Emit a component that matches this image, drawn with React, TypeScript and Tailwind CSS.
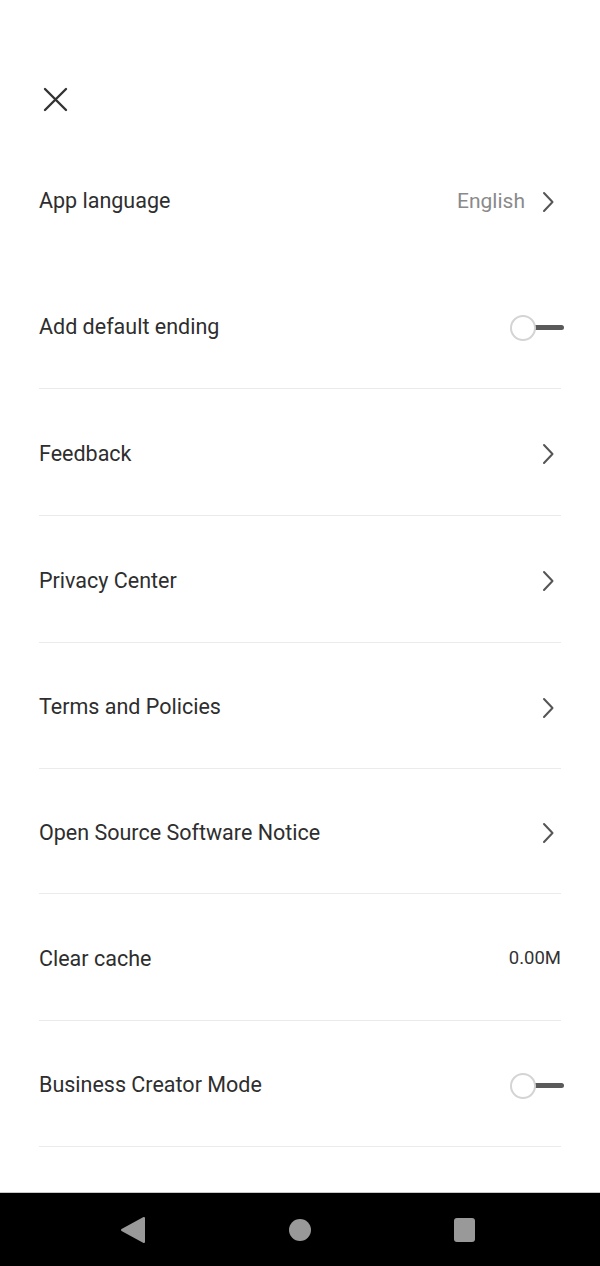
const font = { fontFamily: "Roboto, 'Noto Sans', sans-serif" };

function Chevron() {
  return (
    <svg width="14" height="22" viewBox="0 0 14 22" fill="none" className="shrink-0">
      <path d="M3 2 L11.5 11 L3 20" stroke="#555555" strokeWidth="2" strokeLinecap="round" strokeLinejoin="round" />
    </svg>
  );
}

function Toggle() {
  return (
    <div className="relative mr-[-3px] flex h-[28px] w-[54px] items-center">
      <div className="absolute left-[24px] h-[5px] w-[30px] rounded-r-full bg-[#5a5a5a]" />
      <div className="relative h-[26px] w-[26px] rounded-full border-2 border-[#d4d4d4] bg-white" />
    </div>
  );
}

type Row = {
  label: string;
  right?: "chevron" | "toggle" | "text";
  value?: string;
  h: string;
};

const rows: Row[] = [
  { label: "Add default ending", right: "toggle", h: "h-[125px]" },
  { label: "Feedback", right: "chevron", h: "h-[126px]" },
  { label: "Privacy Center", right: "chevron", h: "h-[126px]" },
  { label: "Terms and Policies", right: "chevron", h: "h-[125px]" },
  { label: "Open Source Software Notice", right: "chevron", h: "h-[124px]" },
  { label: "Clear cache", right: "text", value: "0.00M", h: "h-[126px]" },
  { label: "Business Creator Mode", right: "toggle", h: "h-[125px]" },
];

function SettingRow({ row }: { row: Row }) {
  return (
    <div className="border-b border-[#ebebeb]">
      <div className={`flex items-center justify-between pt-[4px] ${row.h}`}>
        <span className="text-[21.5px] text-[#2e2e2e]">{row.label}</span>
        {row.right === "chevron" && (
          <div className="mr-[6px]">
            <Chevron />
          </div>
        )}
        {row.right === "toggle" && <Toggle />}
        {row.right === "text" && <span className="text-[18.5px] text-[#333333]">{row.value}</span>}
      </div>
    </div>
  );
}

export default function App() {
  return (
    <div className="flex h-[1266px] w-[600px] flex-col bg-white" style={font}>
      <div className="flex h-[1192px] flex-col overflow-hidden">
        <div className="flex h-[137px] shrink-0 items-start pl-[43px] pt-[87px]">
          <svg width="25" height="25" viewBox="0 0 25 25" fill="none">
            <path d="M2 2 L23 23 M23 2 L2 23" stroke="#333333" strokeWidth="2.4" strokeLinecap="round" />
          </svg>
        </div>
        <div className="px-[39px]">
          <div className="flex h-[126px] items-center justify-between pt-[3px]">
            <span className="text-[21.5px] text-[#2e2e2e]">App language</span>
            <div className="mr-[6px] flex items-center gap-[16px]">
              <span className="text-[21px] text-[#8a8a8a]">English</span>
              <Chevron />
            </div>
          </div>
          {rows.map((r) => (
            <SettingRow key={r.label} row={r} />
          ))}
        </div>
      </div>
      <div className="flex h-[74px] items-center border-t border-[#c8c8c8] bg-black">
        <div className="ml-[120px] flex items-center gap-[143px]">
          <svg width="26" height="28" viewBox="0 0 26 28">
            <path d="M24 2 L24 26 L2 14 Z" fill="#999999" stroke="#999999" strokeWidth="2" strokeLinejoin="round" />
          </svg>
          <div className="h-[22px] w-[22px] rounded-full bg-[#999999]" />
          <div className="h-[24px] w-[21px] rounded-[3px] bg-[#999999]" />
        </div>
      </div>
    </div>
  );
}
